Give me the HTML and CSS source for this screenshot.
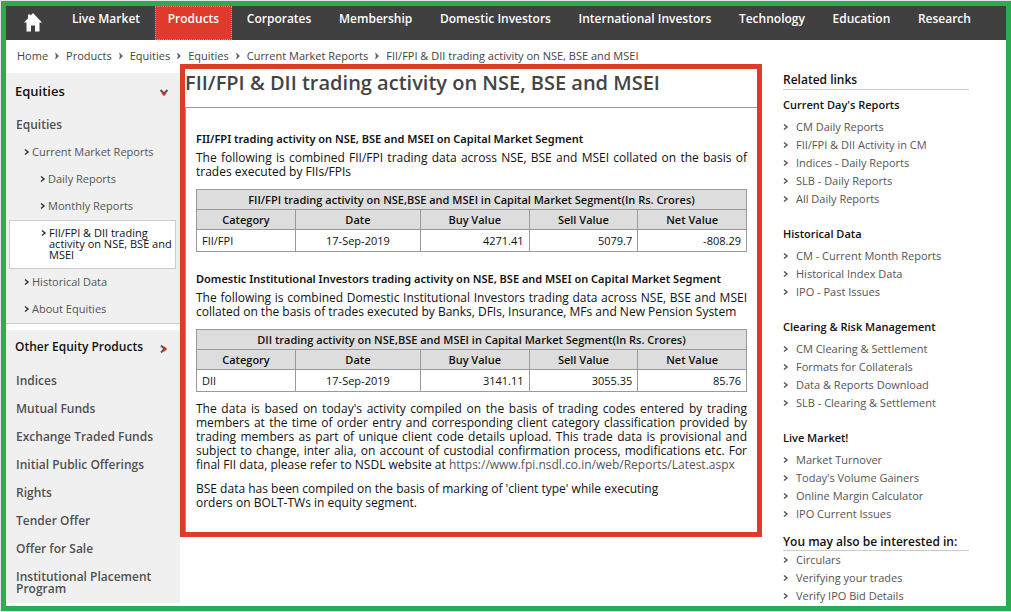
FILE: index.html
```html
<!DOCTYPE html>
<html lang="en">
<head>
<meta charset="utf-8">
<title>FII/FPI &amp; DII trading activity on NSE, BSE and MSEI</title>
<meta name="viewport" content="width=device-width, initial-scale=1">
<link rel="stylesheet" href="styles.css">
</head>
<body>
<svg class="defs" width="0" height="0" aria-hidden="true">
  <symbol id="chevron" viewBox="0 0 6 8"><path d="M1 1.5 4 4 1 6.5" fill="none" stroke="currentColor" stroke-width="1.5"/></symbol>
  <symbol id="crumb" viewBox="0 0 6 8"><path d="M1.500 1 4.500 4 1.500 7 2.300 4Z" fill="currentColor" stroke="currentColor" stroke-width=".5"/></symbol>
  <symbol id="chevron-lg" viewBox="0 0 8 10"><path d="M1 1.500 4.500 5 1 8.500" fill="none" stroke="#555" stroke-width="2"/><path d="M3.500 3 5.800 5 3.500 7" fill="none" stroke="#e0281c" stroke-width="1.800"/></symbol>
</svg>
<div class="page">
  <nav class="topnav" aria-label="Main">
    <a class="home" href="#" aria-label="Home">
      <svg width="18" height="19" viewBox="0 0 18 19"><path d="M9 0 18 9.500H15.500V18.500H11V12.500H7V18.500H2.500V9.500H0L4 5.200V1.500H6.500V2.700Z" fill="#fff"/></svg>
    </a>
    <ul class="menu">
      <li><a href="#">Live Market</a></li>
      <li class="current"><a href="#">Products</a></li>
      <li><a href="#">Corporates</a></li>
      <li><a href="#">Membership</a></li>
      <li><a href="#">Domestic Investors</a></li>
      <li><a href="#">International Investors</a></li>
      <li><a href="#">Technology</a></li>
      <li><a href="#">Education</a></li>
      <li><a href="#">Research</a></li>
    </ul>
  </nav>
  <nav class="crumbs" aria-label="Breadcrumb">
    <a href="#">Home</a><svg class="chev"><use href="#crumb"/></svg>
    <a href="#">Products</a><svg class="chev"><use href="#crumb"/></svg>
    <a href="#">Equities</a><svg class="chev"><use href="#crumb"/></svg>
    <a href="#">Equities</a><svg class="chev"><use href="#crumb"/></svg>
    <a href="#">Current Market Reports</a><svg class="chev"><use href="#crumb"/></svg>
    <span>FII/FPI &amp; DII trading activity on NSE, BSE and MSEI</span>
  </nav>
  <div class="columns">
    <div class="side">
      <section class="panel first">
        <h2>Equities <svg class="chev-lg down"><use href="#chevron-lg"/></svg></h2>
        <ul class="tree">
          <li class="top"><a href="#">Equities</a></li>
          <li class="l1"><svg class="chev"><use href="#chevron"/></svg><a href="#">Current Market Reports</a></li>
          <li class="l2"><svg class="chev"><use href="#chevron"/></svg><a href="#">Daily Reports</a></li>
          <li class="l2"><svg class="chev"><use href="#chevron"/></svg><a href="#">Monthly Reports</a></li>
          <li class="l2 selected"><svg class="chev"><use href="#chevron"/></svg><a href="#">FII/FPI &amp; DII trading activity on NSE, BSE and MSEI</a></li>
          <li class="l1"><svg class="chev"><use href="#chevron"/></svg><a href="#">Historical Data</a></li>
          <li class="l1"><svg class="chev"><use href="#chevron"/></svg><a href="#">About Equities</a></li>
        </ul>
      </section>
      <section class="panel second">
        <h2>Other Equity Products <svg class="chev-lg"><use href="#chevron-lg"/></svg></h2>
        <ul class="products">
          <li><a href="#">Indices</a></li>
          <li><a href="#">Mutual Funds</a></li>
          <li><a href="#">Exchange Traded Funds</a></li>
          <li><a href="#">Initial Public Offerings</a></li>
          <li><a href="#">Rights</a></li>
          <li><a href="#">Tender Offer</a></li>
          <li><a href="#">Offer for Sale</a></li>
          <li><a href="#">Institutional Placement Program</a></li>
        </ul>
      </section>
    </div>
    <main class="report">
      <h1>FII/FPI &amp; DII trading activity on NSE, BSE and MSEI</h1>
      <div class="body">
        <h3>FII/FPI trading activity on NSE, BSE and MSEI on Capital Market Segment</h3>
        <p>The following is combined FII/FPI trading data across NSE, BSE and MSEI collated on the basis of trades executed by FIIs/FPIs</p>
        <table>
          <colgroup><col class="c1"><col class="c2"><col class="c3"><col class="c3"><col class="c3"></colgroup>
          <thead>
            <tr class="title"><th colspan="5">FII/FPI trading activity on NSE,BSE and MSEI in Capital Market Segment(In Rs. Crores)</th></tr>
            <tr><th>Category</th><th>Date</th><th>Buy Value</th><th>Sell Value</th><th>Net Value</th></tr>
          </thead>
          <tbody><tr><td>FII/FPI</td><td class="date">17-Sep-2019</td><td class="num">4271.41</td><td class="num">5079.7</td><td class="num">-808.29</td></tr></tbody>
        </table>
        <h3 class="next">Domestic Institutional Investors trading activity on NSE, BSE and MSEI on Capital Market Segment</h3>
        <p>The following is combined Domestic Institutional Investors trading data across NSE, BSE and MSEI collated on the basis of trades executed by Banks, DFIs, Insurance, MFs and New Pension System</p>
        <table>
          <colgroup><col class="c1"><col class="c2"><col class="c3"><col class="c3"><col class="c3"></colgroup>
          <thead>
            <tr class="title"><th colspan="5">DII trading activity on NSE,BSE and MSEI in Capital Market Segment(In Rs. Crores)</th></tr>
            <tr><th>Category</th><th>Date</th><th>Buy Value</th><th>Sell Value</th><th>Net Value</th></tr>
          </thead>
          <tbody><tr><td>DII</td><td class="date">17-Sep-2019</td><td class="num">3141.11</td><td class="num">3055.35</td><td class="num">85.76</td></tr></tbody>
        </table>
        <p class="note">The data is based on today's activity compiled on the basis of trading codes entered by trading members at the time of order entry and corresponding client category classification provided by trading members as part of unique client code details upload. This trade data is provisional and subject to change, inter alia, on account of custodial confirmation process, modifications etc. For final FII data, please refer to NSDL website at <a href="#">https://www.fpi.nsdl.co.in/web/Reports/Latest.aspx</a></p>
        <p class="note">BSE data has been compiled on the basis of marking of 'client type' while executing<br>orders on BOLT-TWs in equity segment.</p>
      </div>
    </main>
    <aside class="related">
      <h2>Related links</h2>
      <h3>Current Day's Reports</h3>
      <ul>
        <li><svg class="chev"><use href="#chevron"/></svg><a href="#">CM Daily Reports</a></li>
        <li><svg class="chev"><use href="#chevron"/></svg><a href="#">FII/FPI &amp; DII Activity in CM</a></li>
        <li><svg class="chev"><use href="#chevron"/></svg><a href="#">Indices - Daily Reports</a></li>
        <li><svg class="chev"><use href="#chevron"/></svg><a href="#">SLB - Daily Reports</a></li>
        <li><svg class="chev"><use href="#chevron"/></svg><a href="#">All Daily Reports</a></li>
      </ul>
      <h3>Historical Data</h3>
      <ul>
        <li><svg class="chev"><use href="#chevron"/></svg><a href="#">CM - Current Month Reports</a></li>
        <li><svg class="chev"><use href="#chevron"/></svg><a href="#">Historical Index Data</a></li>
        <li><svg class="chev"><use href="#chevron"/></svg><a href="#">IPO - Past Issues</a></li>
      </ul>
      <h3>Clearing &amp; Risk Management</h3>
      <ul>
        <li><svg class="chev"><use href="#chevron"/></svg><a href="#">CM Clearing &amp; Settlement</a></li>
        <li><svg class="chev"><use href="#chevron"/></svg><a href="#">Formats for Collaterals</a></li>
        <li><svg class="chev"><use href="#chevron"/></svg><a href="#">Data &amp; Reports Download</a></li>
        <li><svg class="chev"><use href="#chevron"/></svg><a href="#">SLB - Clearing &amp; Settlement</a></li>
      </ul>
      <h3>Live Market!</h3>
      <ul class="last">
        <li><svg class="chev"><use href="#chevron"/></svg><a href="#">Market Turnover</a></li>
        <li><svg class="chev"><use href="#chevron"/></svg><a href="#">Today's Volume Gainers</a></li>
        <li><svg class="chev"><use href="#chevron"/></svg><a href="#">Online Margin Calculator</a></li>
        <li><svg class="chev"><use href="#chevron"/></svg><a href="#">IPO Current Issues</a></li>
      </ul>
      <h2 class="more">You may also be interested in:</h2>
      <ul class="last">
        <li><svg class="chev"><use href="#chevron"/></svg><a href="#">Circulars</a></li>
        <li><svg class="chev"><use href="#chevron"/></svg><a href="#">Verifying your trades</a></li>
        <li><svg class="chev"><use href="#chevron"/></svg><a href="#">Verify IPO Bid Details</a></li>
      </ul>
    </aside>
  </div>
</div>
</body>
</html>
```
FILE: styles.css
```css
* { box-sizing: border-box; }
body {
  margin: 0;
  padding: 1px 0 1px 1px;
  background: #e4e4e4;
  font: 11px/14px "Trebuchet MS", "Open Sans", sans-serif;
  color: #111;
}
a { color: inherit; text-decoration: none; }
ul { list-style: none; margin: 0; padding: 0; }
h1, h2, h3, p { margin: 0; }
.defs { position: absolute; }
.page {
  min-height: calc(100vh - 2px);
  border: 5px solid #2bab52;
  background: #fff;
}

.topnav {
  display: flex;
  height: 34px;
  background: #404040;
  color: #fff;
}
.home { flex: none; width: 53px; padding: 7px 0 0 18px; }
.home svg { display: block; }
.menu {
  flex: 1;
  display: flex;
  justify-content: space-between;
  margin-right: 22px;
  font-size: 12px;
  line-height: 26px;
  font-weight: 600;
  white-space: nowrap;
}
.menu li { padding: 0 13px; }
.menu a { display: block; }
.menu .current { background: #df3a2a; outline: 1px dotted #999; outline-offset: -1px; }

.crumbs {
  display: flex;
  align-items: center;
  gap: 6px;
  height: 24px;
  padding: 8px 11px 0;
  color: #444;
}
.chev { flex: none; width: 6px; height: 8px; color: #555; }

.columns { display: flex; align-items: flex-start; }
.side { flex: none; width: 174px; padding-top: 9px; }
.panel { background: #f0f0f0; }
.panel h2 {
  display: flex;
  align-items: center;
  justify-content: space-between;
  padding: 0 12px 2px 9px;
  height: 38px;
  font-size: 12px;
  font-weight: 600;
}
.chev-lg { width: 8px; height: 10px; margin-top: 4px; }
.chev-lg.down { transform: rotate(90deg); }
.first { border-bottom: 1px solid #ccc; }
.first h2 { font-size: 13px; }
.tree li { display: flex; align-items: center; min-height: 27px; padding-bottom: 1px; color: #555; }
.tree .top { padding-left: 10px; padding-top: 2px; margin-bottom: 1px; font-size: 12px; font-weight: 600; color: #505050; }
.tree .chev { margin-right: 2px; color: #333; }
.tree .l1 { padding-left: 18px; }
.tree .l2 { padding-left: 34px; }
.tree .selected {
  align-items: flex-start;
  margin: 0 4px 0 3px;
  padding: 6px 0 8px 31px;
  border: 1px solid #ccc;
  background: #fff;
  line-height: 11px;
  color: #111;
}
.selected .chev { margin-top: 2px; }
.second { margin-top: 6px; }
.second h2 { height: 37px; padding-bottom: 3px; }
.products li { padding: 8px 20px 8px 10px; font-size: 12px; line-height: 12px; font-weight: 600; color: #505050; }

.report {
  flex: 1;
  min-width: 0;
  border: 5px solid #df3a2a;
}
.report h1 {
  height: 39px;
  border-bottom: 1px solid #999;
  font-size: 20px;
  line-height: 28px;
  font-weight: 600;
  color: #444;
}
.body { border-left: 1px solid #999; padding: 24px 10px 22px; }
.body h3 { margin-bottom: 5px; font-family: "Trebuchet MS", "Noto Sans", sans-serif; font-size: 11px; font-weight: 600; }
.body .next { margin-top: 20px; }
.body p { font-size: 12px; text-align: justify; }
.body .note { margin-top: 10px; }
.note a { color: #555; }
table { width: 100%; margin-top: 10px; border-collapse: collapse; table-layout: fixed; }
.c1 { width: 18%; }
.c2 { width: 22.7%; }
th, td { height: 20px; padding: 0 5px; border: 1px solid #999; text-align: left; }
th { background: #dcdddc; text-align: center; font-weight: 600; }
td { height: 22px; }
.date { text-align: center; }
.num { text-align: right; }

.related { flex: none; width: 186px; margin: 7px 37px 0 21px; line-height: 18px; }
.related h2 { height: 19px; margin-bottom: 6px; border-bottom: 1px solid #ccc; font-size: 12px; font-weight: 600; line-height: 18px; }
.related h3 { margin-bottom: 4px; font-size: 11px; font-weight: 600; }
.related ul { margin-bottom: 17px; color: #555; }
.related .last { margin-bottom: 10px; }
.related .more { margin: 0; height: 18px; }
.related ul.last:last-child { margin: 0; }
.related li { display: flex; align-items: center; gap: 7px; }
```
